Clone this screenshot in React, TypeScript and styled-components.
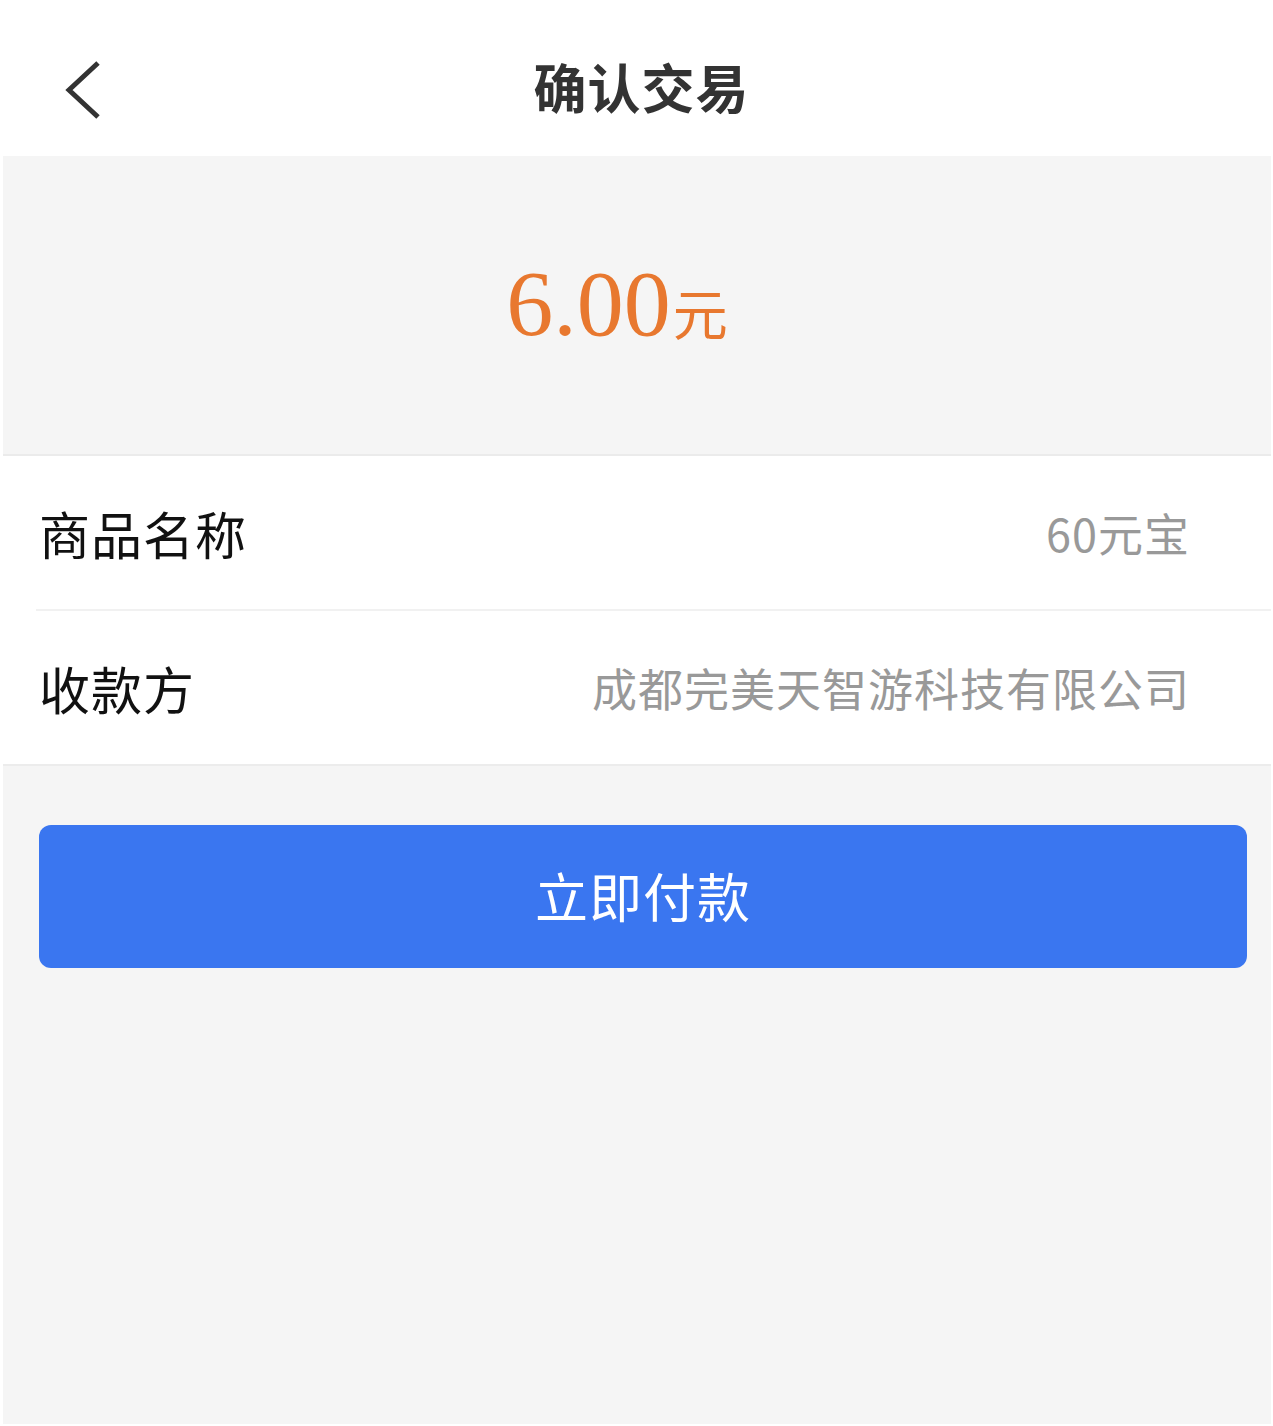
import React from "react";
import styled, { createGlobalStyle } from "styled-components";

const GlobalStyle = createGlobalStyle`
  html, body {
    margin: 0;
    padding: 0;
    background: #ffffff;
  }
  body {
    font-family: "Noto Sans CJK SC", "Noto Sans", sans-serif;
  }
`;

const Page = styled.div`
  display: flex;
  flex-direction: column;
  width: 1273px;
  height: 1426px;
  padding: 0 2px 2px 3px;
  box-sizing: border-box;
  background: #ffffff;
`;

const NavBar = styled.header`
  display: flex;
  align-items: center;
  justify-content: center;
  position: relative;
  height: 156px;
  margin-left: -3px;
  background: #ffffff;
`;

const BackButton = styled.button`
  position: absolute;
  left: 60px;
  top: 58px;
  width: 46px;
  height: 64px;
  padding: 0;
  border: none;
  background: none;
  cursor: pointer;
`;

const Title = styled.h1`
  margin: 16px 0 0 12px;
  font-size: 53px;
  font-weight: 700;
  color: #333333;
  letter-spacing: 1px;
`;

const AmountBlock = styled.section`
  display: flex;
  align-items: center;
  justify-content: center;
  height: 298px;
  background: #f5f5f5;
  border-bottom: 2px solid #ebebeb;
`;

const Amount = styled.div`
  display: flex;
  align-items: baseline;
  margin: 0 0 4px -40px;
  color: #e8782f;
`;

const Figure = styled.span`
  font-family: "Liberation Serif", "DejaVu Serif", serif;
  font-size: 94px;
  line-height: 1;
`;

const Unit = styled.span`
  font-family: "Noto Sans CJK SC", sans-serif;
  font-size: 55px;
  line-height: 1;
  margin-left: 2px;
`;

const InfoList = styled.section`
  display: flex;
  flex-direction: column;
  background: #ffffff;
  border-bottom: 2px solid #ececec;
`;

const Row = styled.div<{ $divider?: boolean }>`
  display: flex;
  align-items: center;
  justify-content: space-between;
  height: 153px;
  margin-left: 33px;
  padding-right: 81px;
  border-bottom: ${(p) => (p.$divider ? "2px solid #f1f1f1" : "none")};
`;

const Label = styled.span`
  font-size: 51px;
  color: #111111;
  margin-left: 3px;
  letter-spacing: 1px;
`;

const Value = styled.span`
  font-size: 45px;
  color: #999999;
  letter-spacing: 1px;
`;

const Footer = styled.section`
  flex: 1;
  display: flex;
  flex-direction: column;
  padding: 59px 24px 0 36px;
  background: #f5f5f5;
`;

const PayButton = styled.button`
  height: 143px;
  padding-bottom: 4px;
  border: none;
  border-radius: 12px;
  background: #3a76f0;
  color: #ffffff;
  font-family: "Noto Sans CJK SC", sans-serif;
  font-size: 53px;
  letter-spacing: 1px;
  cursor: pointer;
`;

export default function App() {
  return (
    <>
      <GlobalStyle />
      <Page>
        <NavBar>
          <BackButton aria-label="back">
            <svg width="46" height="64" viewBox="0 0 46 64" fill="none">
              <path
                d="M38 5 L9 32 L38 59"
                stroke="#333333"
                strokeWidth="5"
                strokeLinecap="butt"
                strokeLinejoin="miter"
              />
            </svg>
          </BackButton>
          <Title>确认交易</Title>
        </NavBar>
        <AmountBlock>
          <Amount>
            <Figure>6.00</Figure>
            <Unit>元</Unit>
          </Amount>
        </AmountBlock>
        <InfoList>
          <Row $divider>
            <Label>商品名称</Label>
            <Value>60元宝</Value>
          </Row>
          <Row>
            <Label>收款方</Label>
            <Value>成都完美天智游科技有限公司</Value>
          </Row>
        </InfoList>
        <Footer>
          <PayButton>立即付款</PayButton>
        </Footer>
      </Page>
    </>
  );
}
